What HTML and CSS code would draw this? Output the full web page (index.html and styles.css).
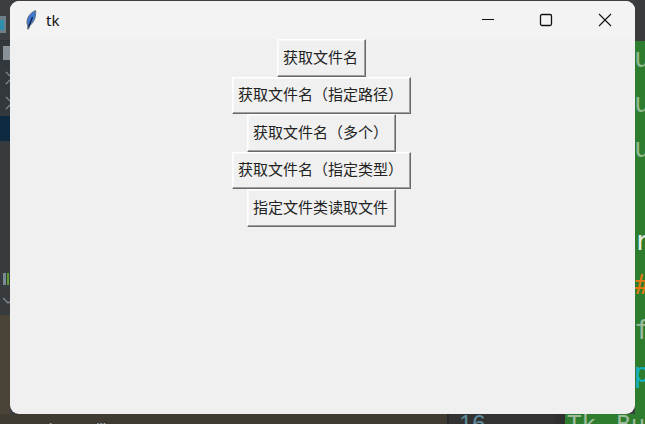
FILE: index.html
```html
<!DOCTYPE html>
<html lang="zh">
<head>
<meta charset="utf-8">
<title>tk</title>
<link rel="stylesheet" href="styles.css">
</head>
<body>
<div class="desktop">
  <div class="ide-left">
    <div class="left-top"><span class="left-icon"><i class="left-icon-fill"></i></span></div>
    <div class="left-tree">
      <span class="tree-block"></span>
      <svg class="chev" width="9" height="14" viewBox="0 0 9 14"><path d="M1 1l6 6-6 6" fill="none" stroke="#8b9095" stroke-width="1.200"/></svg>
      <svg class="chev" width="9" height="14" viewBox="0 0 9 14"><path d="M1 1l6 6-6 6" fill="none" stroke="#8b9095" stroke-width="1.200"/></svg>
    </div>
    <div class="left-selected"></div>
    <div class="left-lower">
      <span class="bars"><i class="bar-gray"></i><i class="bar-green"></i></span>
      <svg class="chev-down" width="10" height="8" viewBox="0 0 10 8"><path d="M0 1l5 5 5-3" fill="none" stroke="#8b9095" stroke-width="1.200"/></svg>
    </div>
    <div class="left-brown"></div>
  </div>
  <div class="ide-right">
    <div class="right-top"></div>
    <div class="right-code">
      <span class="code-u code-a">u</span>
      <span class="code-u code-b">u</span>
      <span class="code-u code-c">u</span>
      <span class="code-r">r</span>
      <span class="code-hash">#</span>
      <span class="code-f">f</span>
      <span class="code-p">p</span>
    </div>
  </div>
  <div class="bottom">
    <div class="bottom-brown"><span class="bottom-text">i Pandlia</span></div>
    <div class="bottom-gutter"><span class="line-no">16</span></div>
    <div class="bottom-green"><span class="bottom-code">Tk Bu</span></div>
  </div>
</div>

<main class="window">
  <header class="titlebar">
    <svg class="feather" width="12" height="20" viewBox="0 0 12 20">
      <path d="M2.500 19L3 16C0.500 12 2.500 4 10.500 0.500C11.500 6 9 12 5 15.500L3.500 19z" fill="#3f78d0" stroke="#5c6470" stroke-width="0.900"/>
      <path d="M3.500 17L7.500 7" fill="none" stroke="#0c1c38" stroke-width="1.200"/>
    </svg>
    <span class="title">tk</span>
    <div class="controls">
      <span class="control"><svg width="16" height="16" viewBox="0 0 16 16"><path d="M2 7.500h12" stroke="#111" stroke-width="1"/></svg></span>
      <span class="control"><svg width="16" height="16" viewBox="0 0 16 16"><rect x="2.500" y="2.500" width="11" height="11" rx="1.500" fill="none" stroke="#111" stroke-width="1.300"/></svg></span>
      <span class="control"><svg width="16" height="16" viewBox="0 0 16 16"><path d="M2 2l12 12M14 2L2 14" stroke="#111" stroke-width="1.100"/></svg></span>
    </div>
  </header>
  <section class="content">
    <button class="tk-btn">获取文件名</button>
    <button class="tk-btn">获取文件名（指定路径）</button>
    <button class="tk-btn">获取文件名（多个）</button>
    <button class="tk-btn">获取文件名（指定类型）</button>
    <button class="tk-btn">指定文件类读取文件</button>
  </section>
</main>
</body>
</html>
```
FILE: styles.css
```css
* { box-sizing: border-box; }
html, body { margin: 0; padding: 0; }
body {
  width: 645px;
  height: 424px;
  position: relative;
  overflow: hidden;
  background: #3c3f41;
  font-family: "Liberation Sans", "Noto Sans CJK SC", sans-serif;
}
.desktop {
  width: 645px;
  height: 424px;
  display: grid;
  grid-template-columns: 10px 1fr 10px;
  grid-template-rows: 414px 10px;
}
.ide-left { grid-column: 1; grid-row: 1; display: flex; flex-direction: column; overflow: hidden; }
.left-top { height: 41px; flex: none; background: #3c3f41; padding-top: 16px; border-bottom: 1px solid #2f3234; }
.left-icon { display: flex; align-items: center; width: 6px; height: 17px; background: #6f7f86; }
.left-icon-fill { display: block; width: 4px; height: 10px; background: #2f8fb0; }
.left-tree { height: 75px; flex: none; background: #33383c; padding-top: 5px; display: flex; flex-direction: column; }
.tree-block { flex: none; width: 10px; height: 14px; background: #8a9299; margin: 0 0 11px 3px; }
.chev { margin: 0 0 11px 5px; flex: none; }
.left-selected { height: 25px; flex: none; background: #0d2a40; }
.left-lower { height: 174px; flex: none; background: #383b3e; padding-top: 132px; }
.bars { display: flex; gap: 1px; margin-left: 3px; }
.bar-gray { width: 3px; height: 12px; background: #7b8a90; }
.bar-green { width: 2px; height: 12px; background: #5f9e36; }
.chev-down { display: block; margin: 12px 0 0 3px; }
.left-brown { flex: 1; background: #4a4438; }

.ide-right { grid-column: 3; grid-row: 1; display: flex; flex-direction: column; overflow: hidden; }
.right-top { height: 41px; flex: none; background: #3a3b3d; }
.right-code { flex: 1; background: #2e7d2e; position: relative; font: 27px/30px "DejaVu Sans Mono", monospace; }
.right-code span { position: absolute; left: -1px; }
.code-u { color: #8fb98f; }
.code-a { top: 2px; } .code-b { top: 47px; } .code-c { top: 92px; }
.code-r { top: 185px; color: #e4ece4; }
.code-hash { top: 229px; color: #e07a10; }
.code-f { top: 274px; color: #9dbb9d; }
.code-p { top: 317px; color: #10b4c0; }

.bottom { grid-column: 1 / -1; grid-row: 2; display: flex; overflow: hidden; }
.bottom-brown { width: 447px; flex: none; background: #3f3b32; padding-left: 49px; color: #aeb6ba; font-size: 15px; line-height: 20px; word-spacing: 8px; }
.bottom-text { display: block; margin-top: 5px; }
.bottom-gutter { width: 118px; flex: none; background: #323232; color: #5f8a9a; font: 24px/24px "Liberation Sans", sans-serif; padding-left: 10px; border-left: 2px solid #262829; border-right: 10px solid #2e2e2e; }
.line-no { display: block; margin-top: -2px; }
.bottom-green { flex: 1; background: #2e7d2e; color: #9dbb9d; font: 24px/24px "DejaVu Sans Mono", monospace; padding-left: 2px; word-spacing: 6px; }
.bottom-code { display: block; margin-top: -1px; white-space: nowrap; }

.window {
  position: absolute;
  left: 10px;
  top: 1px;
  width: 625px;
  height: 413px;
  background: #f0f0f0;
  border-radius: 9px;
  overflow: hidden;
  display: flex;
  flex-direction: column;
}
.titlebar {
  height: 38px;
  flex: none;
  background: #f3f3f3;
  display: flex;
  align-items: center;
  padding: 0 1px 0 15px;
}
.feather { flex: none; }
.title { font: 15px/20px "Noto Sans", "Liberation Sans", sans-serif; color: #111; margin-left: 9px; }
.controls { margin-left: auto; display: flex; }
.control { width: 58.500px; height: 38px; display: flex; align-items: center; justify-content: center; }
.content {
  flex: 1;
  display: flex;
  flex-direction: column;
  align-items: center;
  padding-right: 2px;
}
.tk-btn {
  height: 37.500px;
  padding: 0 7px 2px 5px;
  margin: 0;
  background: #f0f0f0;
  border: 1px solid;
  border-color: #ffffff #696969 #696969 #ffffff;
  box-shadow: inset -1px -1px #a0a0a0, inset 1px 1px #f8f8f8;
  border-radius: 0;
  font: 15px/20px "Noto Sans CJK SC", sans-serif;
  color: #222;
}
```
